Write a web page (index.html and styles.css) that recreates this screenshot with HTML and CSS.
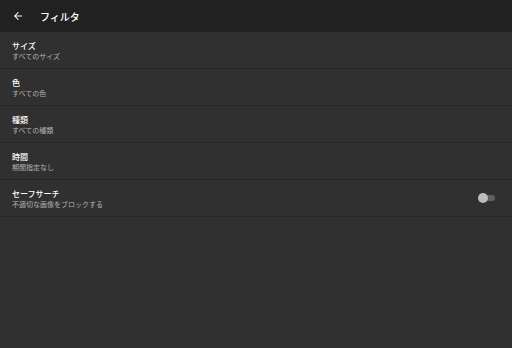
FILE: index.html
```html
<!DOCTYPE html>
<html lang="ja">
<head>
  <meta charset="UTF-8" />
  <title>フィルタ</title>
  <link rel="stylesheet" href="styles.css">
</head>
<body>
  <header class="toolbar">
    <svg class="back" width="12" height="12" viewBox="0 0 24 24">
      <path d="M20 11H7.83l5.59-5.59L12 4l-8 8 8 8 1.41-1.41L7.83 13H20v-2z" fill="#fff"/>
    </svg>
    <h1>フィルタ</h1>
  </header>

  <ul class="list">
    <li class="item">
      <div class="text">
        <div class="title">サイズ</div>
        <div class="sub">すべてのサイズ</div>
      </div>
    </li>
    <li class="item">
      <div class="text">
        <div class="title">色</div>
        <div class="sub">すべての色</div>
      </div>
    </li>
    <li class="item">
      <div class="text">
        <div class="title">種類</div>
        <div class="sub">すべての種類</div>
      </div>
    </li>
    <li class="item">
      <div class="text">
        <div class="title">時間</div>
        <div class="sub">期間指定なし</div>
      </div>
    </li>
    <li class="item">
      <div class="text">
        <div class="title">セーフサーチ</div>
        <div class="sub">不適切な画像をブロックする</div>
      </div>
      <div class="switch"><span class="thumb"></span></div>
    </li>
  </ul>
</body>
</html>
```

FILE: styles.css
```css
html, body {
  margin: 0;
  height: 100%;
}
body {
  font-family: "Noto Sans CJK JP", "Noto Sans", sans-serif;
  background-color: #303030;
  color: #fff;
}
.toolbar {
  height: 32px;
  background-color: #212121;
  display: flex;
  align-items: center;
  padding-left: 12px;
}
.back {
  display: block;
}
.toolbar h1 {
  margin: 0 0 0 16px;
  font-size: 10px;
  font-weight: 500;
}
.list {
  list-style: none;
  margin: 0;
  padding: 0;
}
.item {
  height: 36px;
  border-bottom: 1px solid #262626;
  display: flex;
  align-items: center;
  padding: 0 17px 0 12px;
}
.text {
  flex: 1;
}
.title {
  font-size: 8px;
  font-weight: 500;
  line-height: 11px;
}
.sub {
  font-size: 7px;
  line-height: 10px;
  color: #b0b0b0;
}
.switch {
  position: relative;
  width: 12px;
  height: 6px;
  border-radius: 3px;
  background-color: #5f5f5f;
}
.thumb {
  position: absolute;
  left: -5px;
  top: -2px;
  width: 10px;
  height: 10px;
  border-radius: 50%;
  background-color: #bdbdbd;
}
```
